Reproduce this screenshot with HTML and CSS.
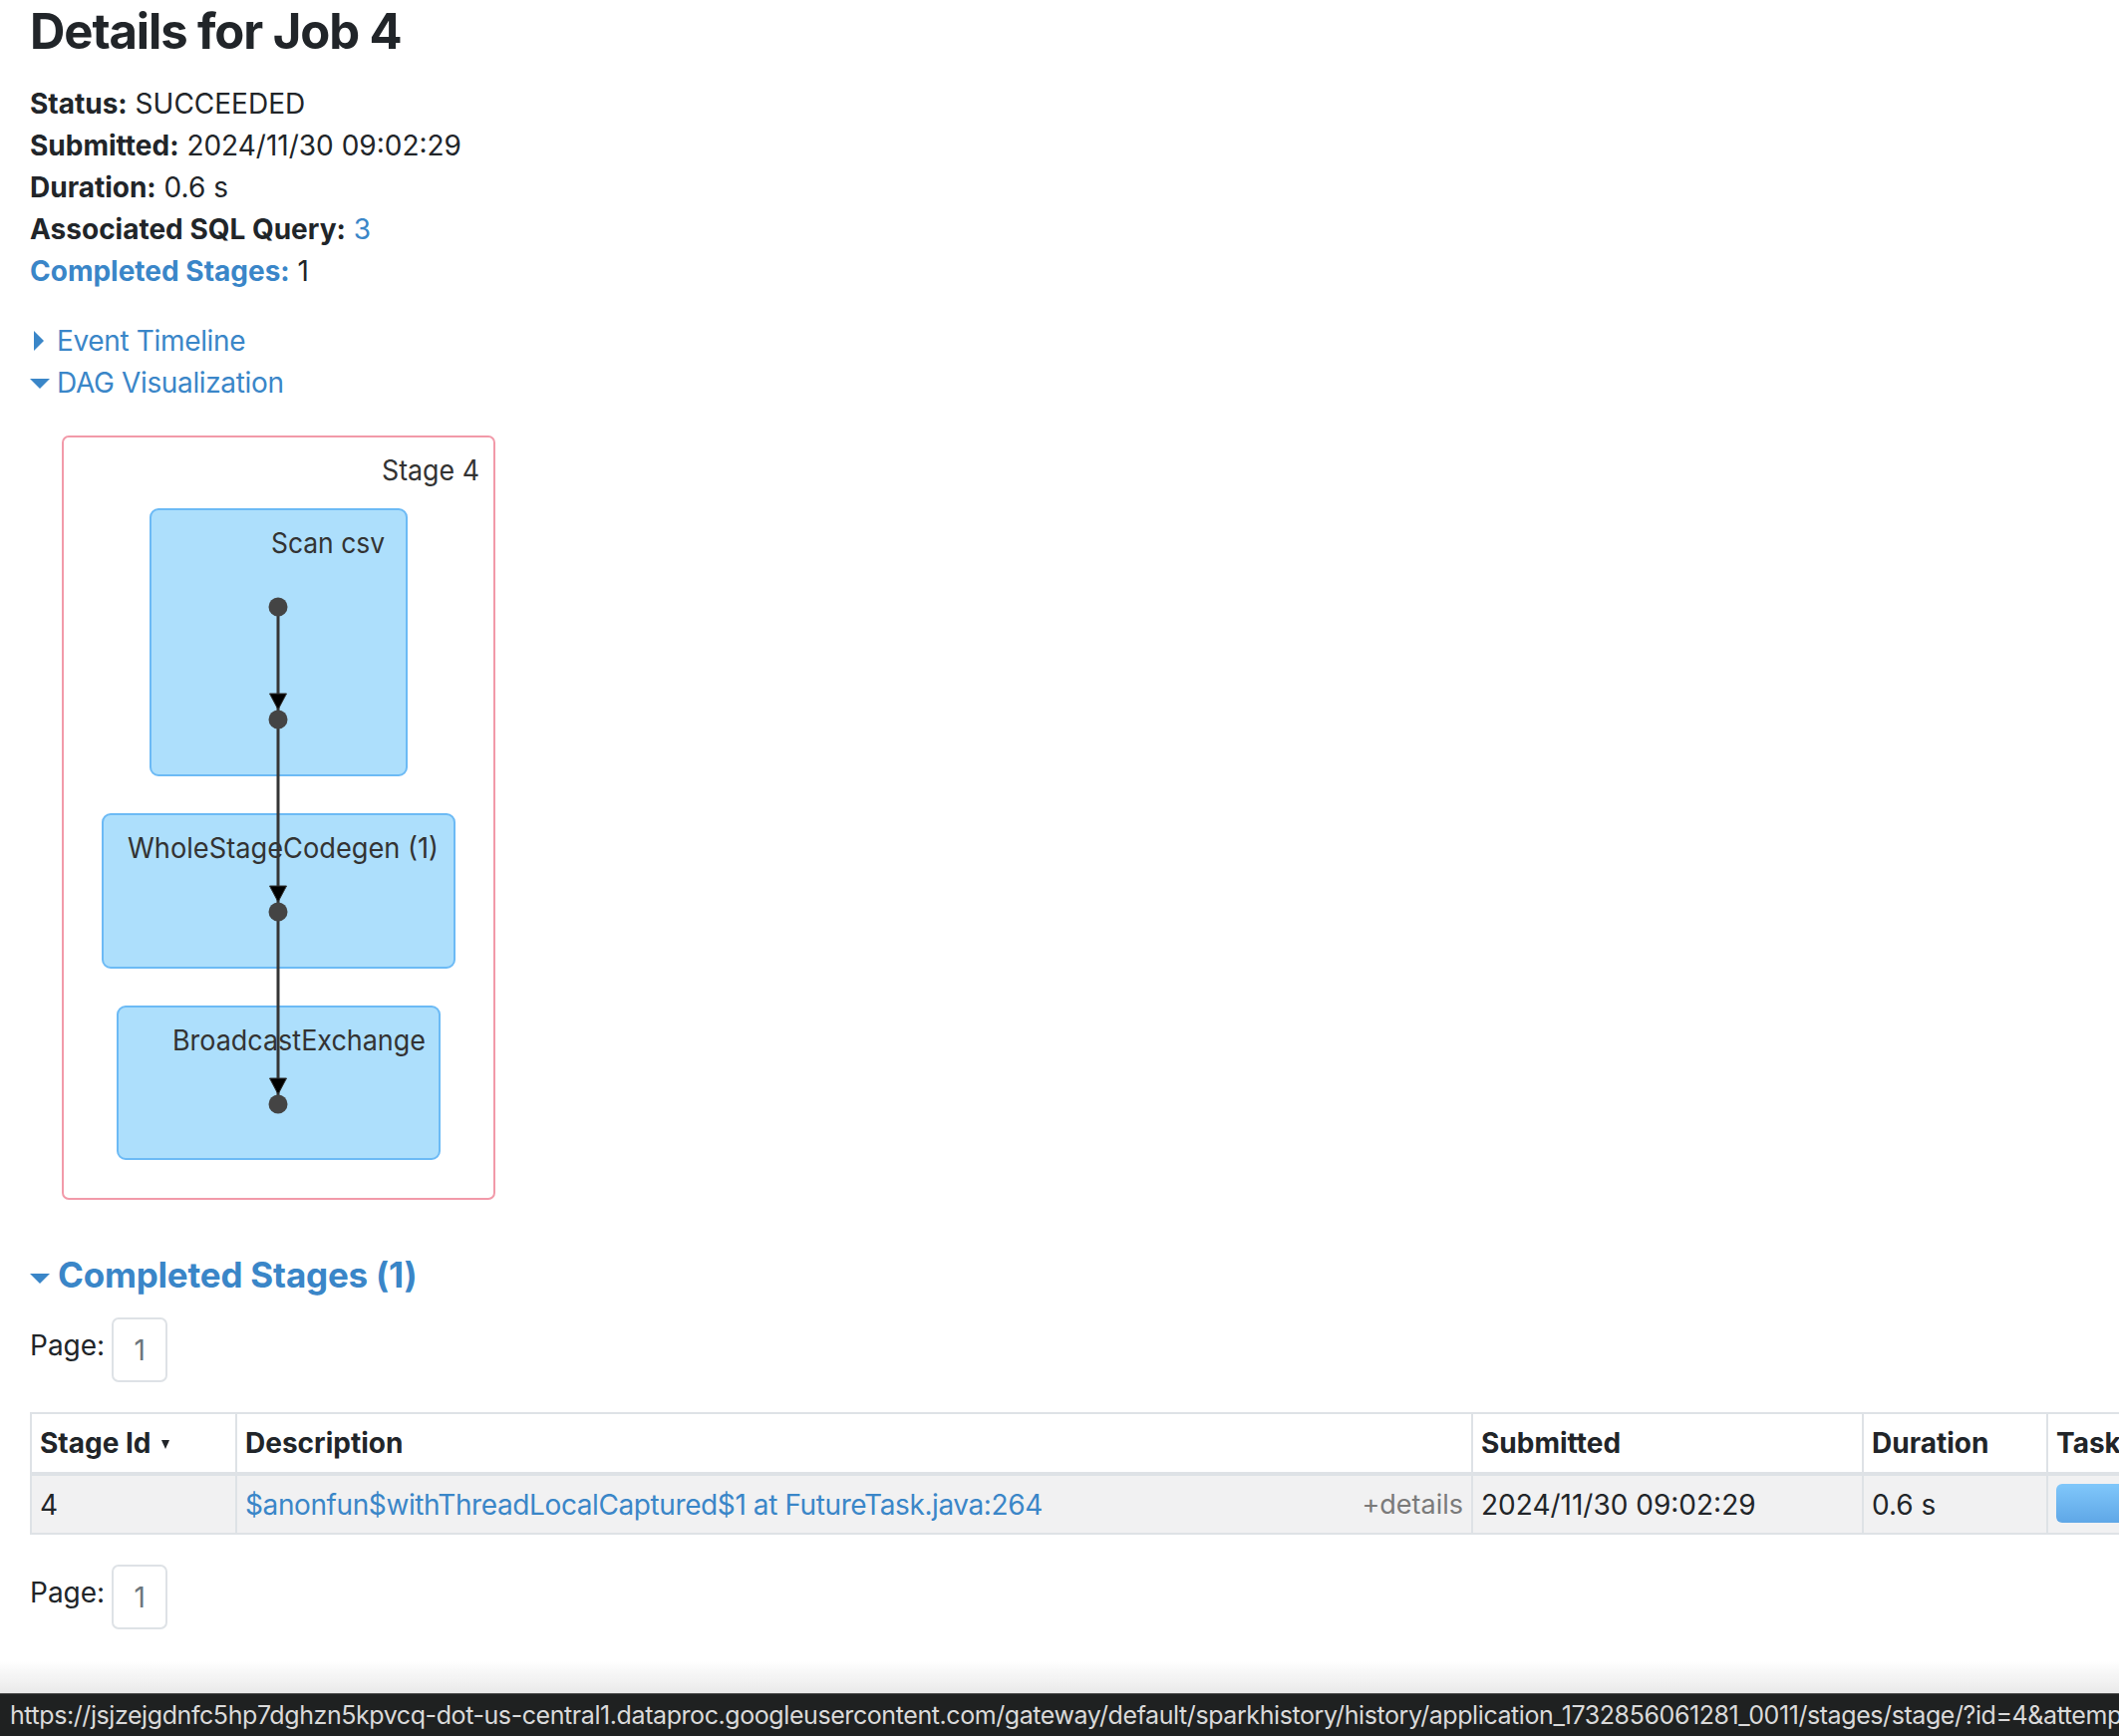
FILE: index.html
```html
<!DOCTYPE html>
<html lang="en">
<head>
<meta charset="utf-8">
<title>Details for Job 4</title>
<link rel="stylesheet" href="styles.css">
</head>
<body>
<div class="container">
  <h3 class="title">Details for Job 4</h3>
  <ul class="summary">
    <li><strong>Status:</strong> SUCCEEDED</li>
    <li><strong>Submitted:</strong> 2024/11/30 09:02:29</li>
    <li><strong>Duration:</strong> 0.6 s</li>
    <li><strong>Associated SQL Query:</strong> <a href="#">3</a></li>
    <li><a href="#"><strong>Completed Stages:</strong></a> 1</li>
  </ul>

  <div class="toggles">
    <a href="#" class="toggle"><span class="arrow-closed"></span>Event Timeline</a>
    <a href="#" class="toggle"><span class="arrow-open"></span>DAG Visualization</a>
  </div>

  <svg class="dag" viewBox="0 0 500 820" width="500" height="820" xmlns="http://www.w3.org/2000/svg">
    <rect class="cluster-stage" x="33" y="33" width="433" height="765" rx="6" ry="6"/>
    <text class="dag-label" x="353" y="77" textLength="98" lengthAdjust="spacingAndGlyphs">Stage 4</text>

    <rect class="cluster-op" x="121" y="106" width="257" height="267" rx="8" ry="8"/>
    <text class="dag-label" x="242" y="150" textLength="114" lengthAdjust="spacingAndGlyphs">Scan csv</text>

    <rect class="cluster-op" x="73" y="412" width="353" height="154" rx="8" ry="8"/>
    <text class="dag-label" x="98" y="456" textLength="312" lengthAdjust="spacingAndGlyphs">WholeStageCodegen (1)</text>

    <rect class="cluster-op" x="88" y="605" width="323" height="153" rx="8" ry="8"/>
    <text class="dag-label" x="143" y="649" textLength="254" lengthAdjust="spacingAndGlyphs">BroadcastExchange</text>

    <line class="edge" x1="249" y1="204" x2="249" y2="703"/>
    <polygon class="arrowhead" points="240.5,291 257.5,291 249,307"/>
    <polygon class="arrowhead" points="240.5,484 257.5,484 249,500"/>
    <polygon class="arrowhead" points="240.5,677 257.5,677 249,693"/>

    <circle class="node" cx="249" cy="204" r="9.5"/>
    <circle class="node" cx="249" cy="317" r="9.5"/>
    <circle class="node" cx="249" cy="510" r="9.5"/>
    <circle class="node" cx="249" cy="703" r="9.5"/>
  </svg>

  <h4 class="section"><span class="arrow-open big"></span>Completed Stages (1)</h4>

  <div class="pager">
    <span class="pager-label">Page:</span>
    <span class="page-box">1</span>
  </div>

  <table class="stages">
    <colgroup>
      <col class="c-id">
      <col class="c-desc">
      <col class="c-sub">
      <col class="c-dur">
      <col class="c-tasks">
      <col class="c-io">
      <col class="c-io">
      <col class="c-io">
      <col class="c-io">
    </colgroup>
    <thead>
      <tr>
        <th><span class="sort-label">Stage Id</span><span class="sort-arrow"></span></th>
        <th>Description</th>
        <th>Submitted</th>
        <th>Duration</th>
        <th>Tasks: Succeeded/Total</th>
        <th>Input</th>
        <th>Output</th>
        <th>Shuffle Read</th>
        <th>Shuffle Write</th>
      </tr>
    </thead>
    <tbody>
      <tr>
        <td>4</td>
        <td><span class="details">+details</span><a href="#" class="desc-link">$anonfun$withThreadLocalCaptured$1 at FutureTask.java:264</a></td>
        <td>2024/11/30 09:02:29</td>
        <td>0.6 s</td>
        <td><div class="progress"><span class="progress-text">1/1</span></div></td>
        <td></td>
        <td></td>
        <td></td>
        <td></td>
      </tr>
    </tbody>
  </table>

  <div class="pager pager-bottom">
    <span class="pager-label">Page:</span>
    <span class="page-box">1</span>
  </div>
</div>

<div class="hover-status">
  <div class="hover-shade"></div>
  <div class="hover-url">https://jsjzejgdnfc5hp7dghzn5kpvcq-dot-us-central1.dataproc.googleusercontent.com/gateway/default/sparkhistory/history/application_1732856061281_0011/stages/stage/?id=4&amp;attempt=0</div>
</div>
</body>
</html>
```

FILE: styles.css
```css
html {
  overflow: hidden;
}

body {
  margin: 0;
  background: #ffffff;
  color: #212529;
  font-family: Inter, "Noto Sans", "Liberation Sans", sans-serif;
  font-size: 28px;
  line-height: 42px;
}

a {
  color: #3a86c8;
  text-decoration: none;
}

.container {
  padding: 3px 30px 0 30px;
}

.title {
  margin: 0 0 22px 0;
  font-size: 49px;
  line-height: 58px;
  font-weight: 700;
  letter-spacing: -1.1px;
}

.summary {
  list-style: none;
  margin: 0;
  padding: 0;
}

.summary strong {
  font-weight: 700;
}

.toggles {
  margin-top: 28px;
  display: flex;
  flex-direction: column;
  align-items: flex-start;
}

.toggle {
  display: flex;
  align-items: center;
  letter-spacing: -0.35px;
}

.arrow-closed {
  width: 0;
  height: 0;
  border-top: 10px solid transparent;
  border-bottom: 10px solid transparent;
  border-left: 10px solid #3a86c8;
  margin-left: 4px;
  margin-right: 13px;
}

.arrow-open {
  width: 0;
  height: 0;
  border-left: 10px solid transparent;
  border-right: 10px solid transparent;
  border-top: 10px solid #3a86c8;
  margin-left: 0;
  margin-right: 7px;
  margin-top: 2px;
}

.arrow-open.big {
  margin-right: 8px;
  margin-top: 7px;
}

.dag {
  display: block;
  width: 500px;
  height: 820px;
}

.cluster-stage {
  fill: #ffffff;
  stroke: #f29aa9;
  stroke-width: 2;
}

.cluster-op {
  fill: #addffc;
  stroke: #6cbaf5;
  stroke-width: 2;
}

.dag-label {
  fill: #333333;
  font-family: Inter, "Noto Sans", sans-serif;
  font-size: 28px;
}

.edge {
  stroke: #363636;
  stroke-width: 3;
}

.arrowhead {
  fill: #000000;
  stroke: #333333;
  stroke-width: 1;
}

.node {
  fill: #444444;
}

.section {
  margin: 33px 0 0 0;
  display: flex;
  align-items: center;
  color: #3a86c8;
  font-size: 35px;
  line-height: 42px;
  font-weight: 700;
  letter-spacing: -0.2px;
}

.pager {
  margin-top: 22px;
  display: flex;
  align-items: flex-start;
}

.pager-bottom {
  margin-top: 30px;
}

.pager-label {
  margin-top: 7px;
}

.page-box {
  box-sizing: border-box;
  width: 56px;
  height: 65px;
  margin-left: 7px;
  display: flex;
  align-items: center;
  justify-content: center;
  border: 2px solid #dee2e6;
  border-radius: 7px;
  color: #6c757d;
}

.stages {
  margin-top: 30px;
  border-collapse: separate;
  border-spacing: 0;
  table-layout: fixed;
  width: 3000px;
  border-top: 2px solid #dee2e6;
  border-left: 2px solid #dee2e6;
}

.c-id { width: 206px; }
.c-desc { width: 1240px; }
.c-sub { width: 392px; }
.c-dur { width: 185px; }
.c-tasks { width: 420px; }
.c-io { width: 140px; }

.stages th,
.stages td {
  box-sizing: border-box;
  padding: 8px 8px 8px 8px;
  text-align: left;
  white-space: nowrap;
  overflow: hidden;
  border-right: 2px solid #dee2e6;
  border-bottom: 2px solid #dee2e6;
  vertical-align: top;
}

.stages th {
  background: #ffffff;
  font-weight: 700;
  border-bottom-width: 4px;
}

.stages td {
  background: #f1f1f2;
  padding-bottom: 7px;
}

.sort-arrow {
  display: inline-block;
  width: 0;
  height: 0;
  margin-left: 10px;
  border-left: 4.5px solid transparent;
  border-right: 4.5px solid transparent;
  border-top: 9px solid #212529;
  vertical-align: 4px;
}

.desc-link {
  letter-spacing: -0.4px;
}

.details {
  float: right;
  color: #7a7a7a;
  font-size: 27px;
}

.progress {
  position: relative;
  height: 39px;
  border-radius: 6px;
  background: linear-gradient(to bottom, #80c7fa, #5fa7e7);
}

.progress-text {
  position: absolute;
  left: 0;
  right: 0;
  top: 0;
  text-align: center;
  line-height: 39px;
  font-size: 24px;
  color: #212529;
}

.hover-status {
  position: fixed;
  left: 0;
  right: 0;
  bottom: 0;
}

.hover-shade {
  height: 32px;
  background: linear-gradient(to bottom, rgba(236, 236, 236, 0), #e9e9e9);
}

.hover-url {
  box-sizing: border-box;
  height: 43px;
  padding-left: 10px;
  border-top: 1px solid #4a4a4a;
  background: #1f2121;
  color: #dadada;
  font-size: 25px;
  letter-spacing: -0.42px;
  line-height: 42px;
  white-space: nowrap;
  overflow: hidden;
}
```
